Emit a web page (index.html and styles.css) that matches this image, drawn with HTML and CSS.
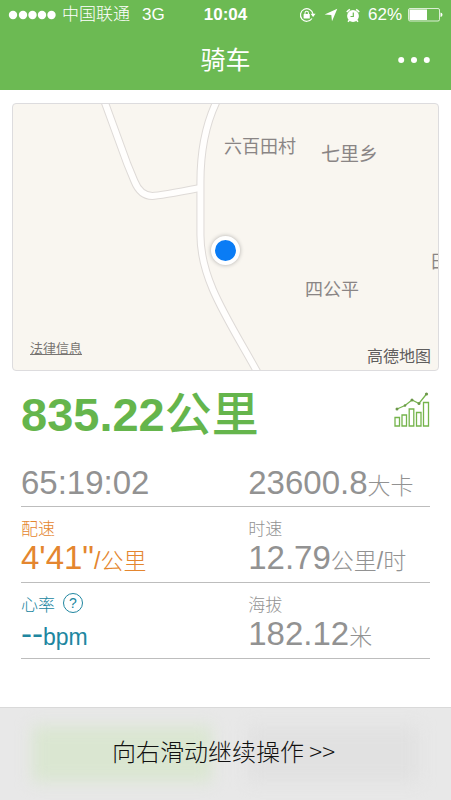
FILE: index.html
```html
<!DOCTYPE html>
<html lang="zh-CN">
<head>
<meta charset="utf-8">
<meta name="viewport" content="width=device-width, initial-scale=1">
<title>骑车</title>
<link rel="stylesheet" href="styles.css">
</head>
<body>
<header class="top">
  <div class="status">
    <div class="carrier">
      <svg width="48" height="10" viewBox="0 0 48 10" fill="currentColor" aria-hidden="true"><circle cx="5" cy="5" r="4.200"/><circle cx="15" cy="5" r="4.200"/><circle cx="24.500" cy="5" r="4.200"/><circle cx="34" cy="5" r="4.200"/><circle cx="43.500" cy="5" r="4.200"/></svg>
      <span class="carrier-name">中国联通</span>
      <span>3G</span>
    </div>
    <time class="clock">10:04</time>
    <div class="indicators">
      <svg width="17" height="16" viewBox="0 0 17 16" aria-hidden="true"><path d="M13 11.500A6.300 6.300 0 1 1 14 7" fill="none" stroke="currentColor" stroke-width="1.200"/><path d="M11.600 6.700h5l-2.500 3.200z" fill="currentColor"/><rect x="4.600" y="7" width="6.200" height="4.600" rx=".5" fill="currentColor"/><path d="M6 7.300V6a1.700 1.700 0 0 1 3.400 0v1.300" fill="none" stroke="currentColor" stroke-width="1.100"/></svg>
      <svg width="14" height="14" viewBox="0 0 14 14" aria-hidden="true"><path d="M13.300.8 8 13.300 7.300 7 .6 6.500z" fill="currentColor"/></svg>
      <svg width="14" height="15" viewBox="0 0 14 15" aria-hidden="true"><circle cx="7" cy="8" r="5.900" fill="currentColor"/><path d="M.8 4.200A9 9 0 0 1 3.900 1.300M13.200 4.200A9 9 0 0 0 10.100 1.300M3.300 12.200 2 13.800M10.700 12.200l1.300 1.600" fill="none" stroke="currentColor" stroke-width="1.500"/><path d="M7.300 4.500v4H4.500" fill="none" stroke="#6cba53" stroke-width="1.200"/></svg>
      <span>62%</span>
      <svg class="battery" width="35" height="14" viewBox="0 0 35 14" aria-hidden="true"><rect x=".5" y=".5" width="31" height="12.500" rx="1.500" fill="none" stroke="currentColor" stroke-opacity=".75"/><rect x="1.500" y="1.500" width="17.500" height="10.500" fill="currentColor"/><path d="M32.500 4.500q2 .5 2 2.200t-2 2.200z" fill="currentColor"/></svg>
    </div>
  </div>
  <div class="titlebar">
    <h1>骑车</h1>
    <button class="more" type="button" aria-label="更多">
      <svg width="32" height="8" viewBox="0 0 32 8" fill="currentColor" aria-hidden="true"><circle cx="3.200" cy="4" r="3"/><circle cx="16" cy="4" r="3"/><circle cx="28.800" cy="4" r="3"/></svg>
    </button>
  </div>
</header>

<main>
  <section class="map" aria-label="地图">
    <svg class="roads" viewBox="0 0 424 266" preserveAspectRatio="xMidYMid slice" aria-hidden="true">
      <defs>
        <path id="west" d="M91-3 114 60 121 77Q127 92 139 92 146 92 187 84"/>
        <path id="main" d="M204-4C191 22 187 50 187 78V131C187 176 214 214 245 270"/>
      </defs>
      <g fill="none" stroke="#dedad7" stroke-width="8"><use href="#west"/><use href="#main"/></g>
      <g fill="none" stroke="#fffefd" stroke-width="6"><use href="#west"/><use href="#main"/></g>
    </svg>
    <span class="place place-liubai">六百田村</span>
    <span class="place place-large place-qili">七里乡</span>
    <span class="place place-sigong">四公平</span>
    <span class="place place-edge">田</span>
    <span class="here"></span>
    <a class="legal" href="#">法律信息</a>
    <span class="provider">高德地图</span>
  </section>

  <section class="stats">
    <div class="distance">
      <p>835.22<span>公里</span></p>
      <button class="chart" type="button" aria-label="图表">
        <svg width="36" height="36" viewBox="0 0 36 36" aria-hidden="true"><g fill="none" stroke="#75b44c" stroke-width="1.300"><path d="M1 25.500h4.500V34H1zM8 23h4.500v11H8zM15.200 17h4.600v17h-4.600zM22.500 20.500H27V34h-4.500zM29.500 10.500h5V34h-5z"/><path d="m3 17 8-3.500L18 8l7 3.500L32.500 2"/></g><g fill="#6d974b"><circle cx="3" cy="17" r="1.500"/><circle cx="11" cy="13.500" r="1.300"/><circle cx="18" cy="8" r="1.500"/><circle cx="25" cy="11.500" r="1.500"/><circle cx="32.500" cy="2" r="1.600"/></g></svg>
      </button>
    </div>
    <div class="row row-first">
      <p class="value">65:19:02</p>
      <p class="value">23600.8<small>大卡</small></p>
    </div>
    <div class="row">
      <div class="pace">
        <h2>配速</h2>
        <p class="value">4'41"<small>/公里</small></p>
      </div>
      <div>
        <h2>时速</h2>
        <p class="value">12.79<small>公里/时</small></p>
      </div>
    </div>
    <div class="row">
      <div class="heart">
        <h2>心率 <button class="help" type="button" aria-label="帮助">?</button></h2>
        <p class="value"><b>--</b><small>bpm</small></p>
      </div>
      <div>
        <h2>海拔</h2>
        <p class="value">182.12<small>米</small></p>
      </div>
    </div>
  </section>
</main>

<button class="slide" type="button"><span>向右滑动继续操作 &gt;&gt;</span></button>
</body>
</html>
```
FILE: styles.css
```css
* {
  box-sizing: border-box;
}

body {
  margin: 0;
  min-height: 100vh;
  display: flex;
  flex-direction: column;
  background: #fff;
  color: #929292;
  font-family: "Liberation Sans", "Noto Sans CJK SC", sans-serif;
  font-weight: 300;
}

h1,
h2,
p {
  margin: 0;
  font-weight: inherit;
}

button {
  padding: 0;
  border: 0;
  background: none;
  color: inherit;
  font: inherit;
}

svg {
  display: block;
}

/* Header */
.top {
  background: #6cba53;
  color: #fff;
}

.status {
  display: grid;
  grid-template-columns: 1fr auto 1fr;
  align-items: center;
  height: 30px;
  padding: 0 8px;
  font-size: 17px;
  line-height: 24px;
}

.carrier,
.indicators {
  display: flex;
  align-items: center;
  white-space: nowrap;
}

.carrier {
  gap: 6px;
}

.carrier-name {
  margin-right: 6px;
}

.clock {
  font-weight: 700;
}

.indicators {
  justify-content: flex-end;
  gap: 8px;
}

.battery {
  margin-left: -2px;
}

.titlebar {
  display: grid;
  grid-template-columns: 1fr auto 1fr;
  align-items: center;
  height: 60px;
  padding: 0 21px;
}

.titlebar h1 {
  grid-column: 2;
  font-size: 25px;
  line-height: 36px;
  font-weight: 400;
}

.more {
  justify-self: end;
}

/* Map */
.map {
  position: relative;
  height: 268px;
  margin: 13px 12px 0;
  overflow: hidden;
  border: 1px solid #dddcde;
  border-radius: 4px;
  background: #f9f6f0;
}

.roads {
  width: 100%;
  height: 100%;
}

.place {
  position: absolute;
  color: #8a8585;
  font-size: 18px;
  font-weight: 400;
  line-height: 24px;
  white-space: nowrap;
}

.place-large {
  font-size: 19px;
}

.place-liubai {
  left: 211px;
  top: 31px;
}

.place-qili {
  left: 308px;
  top: 39px;
}

.place-sigong {
  left: 292px;
  top: 174px;
}

.place-edge {
  left: 418px;
  top: 146px;
}

.here {
  position: absolute;
  left: 198px;
  top: 132px;
  width: 29px;
  height: 29px;
  border: 4px solid #fff;
  border-radius: 50%;
  background: #0a7cf5;
  box-shadow: 0 0 4px #b0aeab;
}

.legal {
  position: absolute;
  left: 17px;
  bottom: 11px;
  color: #777471;
  font-size: 13px;
  font-weight: 400;
  line-height: 20px;
}

.provider {
  position: absolute;
  right: 7px;
  bottom: 3px;
  color: #5f5d5d;
  font-size: 16px;
  font-weight: 400;
  line-height: 20px;
}

/* Figures */
.stats {
  padding: 0 21px;
}

.distance {
  display: flex;
  align-items: center;
  justify-content: space-between;
  height: 88px;
  color: #65b54c;
  font-size: 47px;
  font-weight: 700;
  line-height: 56px;
}

.distance span {
  font-weight: 500;
}

.chart {
  align-self: flex-start;
  margin-top: 21px;
}

.row {
  display: grid;
  grid-template-columns: 5fr 4fr;
  height: 76px;
  padding-top: 8px;
  border-bottom: 1px solid #bdbdbd;
}

.row-first {
  height: 48px;
  padding-top: 5px;
}

.row h2 {
  display: flex;
  align-items: center;
  gap: 8px;
  height: 24px;
  font-size: 17px;
}

.value {
  font-size: 33px;
  line-height: 38px;
  white-space: nowrap;
}

.value small {
  font-size: 23px;
  line-height: 24px;
}

.pace {
  color: #e4862f;
}

.heart {
  color: #2086a0;
}

.help {
  width: 20px;
  height: 20px;
  border: 1px solid currentColor;
  border-radius: 50%;
  font-size: 14px;
  line-height: 18px;
}

/* Slide bar, with the blurred buttons showing through */
.slide {
  position: relative;
  overflow: hidden;
  width: 100%;
  height: 93px;
  margin-top: auto;
  padding: 0 4px 6px 0;
  border-top: 1px solid #d9d9d9;
  background: #e8e8e8;
  color: #111;
  font-family: "Noto Sans CJK SC", sans-serif;
  font-size: 24px;
  line-height: 36px;
}

.slide::before,
.slide::after {
  content: "";
  position: absolute;
  top: 20%;
  bottom: 20%;
  filter: blur(8px);
}

.slide::before {
  left: 7%;
  right: 53%;
  background: #dae6d1;
}

.slide::after {
  left: 55%;
  right: 7%;
  background: #e1e1e1;
}

.slide span {
  position: relative;
  z-index: 1;
}
```
